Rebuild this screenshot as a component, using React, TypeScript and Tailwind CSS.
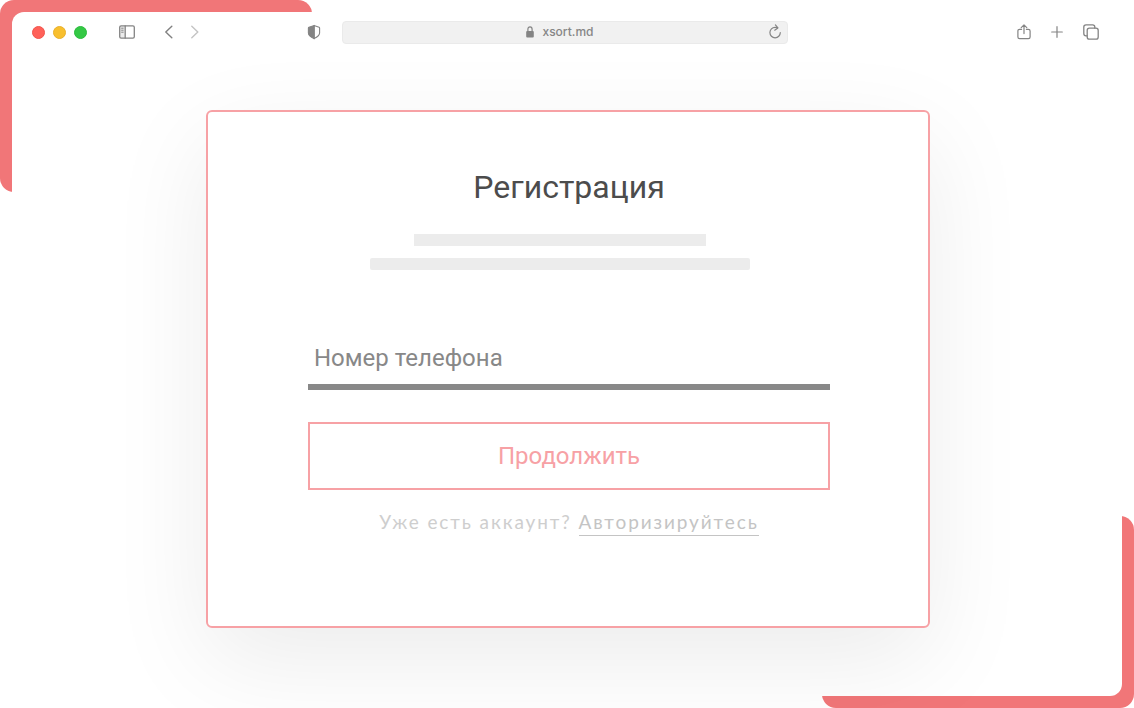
const iconProps = {
  fill: "none",
  stroke: "#848484",
  strokeLinecap: "round" as const,
  strokeLinejoin: "round" as const,
  "aria-hidden": true,
};

function SidebarIcon() {
  return (
    <svg width="16" height="14" viewBox="0 0 16 14" {...iconProps} strokeWidth="1.3">
      <rect x="1" y="1" width="5" height="12" fill="#ececec" stroke="none" />
      <rect x="0.7" y="0.9" width="14.6" height="12.2" rx="1.4" />
      <path d="M6.2 0.9V13.1" />
      <path d="M2.6 3.2H4.2M2.6 5.2H4.2M2.6 7.2H4.2" strokeWidth="1" />
    </svg>
  );
}

function ChevronIcon({ forward = false }: { forward?: boolean }) {
  return (
    <svg width="8" height="14" viewBox="0 0 8 14" {...iconProps} stroke={forward ? "#c4c4c4" : "#808080"} strokeWidth="1.4">
      <path d={forward ? "M0.8 1.2L6.8 7L0.8 12.8" : "M6.8 1.2L0.8 7L6.8 12.8"} />
    </svg>
  );
}

function ShieldIcon() {
  return (
    <svg width="14" height="16" viewBox="0 0 14 16" {...iconProps} strokeWidth="1.1">
      <path d="M7 1.5L12.1 3.2Q12.6 3.4 12.6 4V9C12.6 11.4 10.6 12.9 7 14.6" />
      <path d="M7.3 1.4V14.7C3.4 12.9 1.4 11.4 1.4 9V4Q1.4 3.4 1.9 3.2L7.3 1.4Z" fill="#848484" />
    </svg>
  );
}

function LockIcon() {
  return (
    <svg width="8" height="12" viewBox="0 0 8 12" {...iconProps} strokeWidth="1.2">
      <path d="M1.9 5.5V3.2C1.9 1.8 2.8 0.9 4 0.9S6.1 1.8 6.1 3.2V5.5" />
      <rect x="0.2" y="5" width="7.6" height="6.6" rx="1" fill="#848484" stroke="none" />
    </svg>
  );
}

function ReloadIcon() {
  return (
    <svg width="14" height="16" viewBox="0 0 14 16" {...iconProps} strokeWidth="1.2">
      <path d="M12.3 8.6A5.2 5.2 0 1 1 7.1 3.4C8 3.4 8.8 3.6 9.6 3.9" />
      <path d="M7.4 0.9L9.9 3.9L6.7 6.2" />
    </svg>
  );
}

function ShareIcon() {
  return (
    <svg width="14" height="16" viewBox="0 0 14 16" {...iconProps} strokeWidth="1.2">
      <path d="M4.6 5.3H2.6C1.5 5.3 0.9 5.9 0.9 7V13C0.9 14.1 1.5 14.7 2.6 14.7H11.4C12.5 14.7 13.1 14.1 13.1 13V7C13.1 5.9 12.5 5.3 11.4 5.3H9.4" />
      <path d="M7 9.6V1.2M4.2 3.6L7 0.9L9.8 3.6" />
    </svg>
  );
}

function PlusIcon() {
  return (
    <svg width="12" height="12" viewBox="0 0 12 12" {...iconProps} strokeWidth="1.2">
      <path d="M6 0.7V11.3M0.7 6H11.3" />
    </svg>
  );
}

function TabsIcon() {
  return (
    <svg width="16" height="16" viewBox="0 0 16 16" {...iconProps} strokeWidth="1.3">
      <rect x="4.2" y="4.2" width="11" height="11" rx="2.2" />
      <path d="M4.2 11.8H3C1.6 11.8 0.8 11 0.8 9.6V3C0.8 1.6 1.6 0.8 3 0.8H9.6C11 0.8 11.8 1.6 11.8 3V4.2" />
    </svg>
  );
}

function Toolbar() {
  return (
    <header className="grid h-10 grid-cols-[1fr_minmax(0,446px)_1fr] items-center pr-1">
      <div className="flex items-center pl-5">
        <div className="flex gap-2">
          <button type="button" aria-label="Закрыть" className="size-[13px] rounded-full border border-[#f2544b] bg-[#ff6159]" />
          <button type="button" aria-label="Свернуть" className="size-[13px] rounded-full border border-[#e9b02b] bg-[#f8bf2e]" />
          <button type="button" aria-label="Развернуть" className="size-[13px] rounded-full border border-[#2bbc3d] bg-[#34c845]" />
        </div>
        <button type="button" aria-label="Боковая панель" className="ml-8"><SidebarIcon /></button>
        <button type="button" aria-label="Назад" className="ml-[30px]"><ChevronIcon /></button>
        <button type="button" aria-label="Вперёд" className="ml-[18px]"><ChevronIcon forward /></button>
        <button type="button" aria-label="Конфиденциальность" className="mr-[21px] ml-auto"><ShieldIcon /></button>
      </div>
      <div className="flex h-[23px] items-center rounded border border-[#eaeaea] bg-[#f1f1f1] px-[5px]">
        <p className="flex flex-1 items-center justify-center gap-2 pl-1 font-['Inter',sans-serif] text-xs font-medium text-[#868686]">
          <LockIcon />
          xsort.md
        </p>
        <button type="button" aria-label="Обновить"><ReloadIcon /></button>
      </div>
      <div className="flex items-center justify-end gap-5 pr-[19px]">
        <button type="button" aria-label="Поделиться"><ShareIcon /></button>
        <button type="button" aria-label="Новая вкладка"><PlusIcon /></button>
        <button type="button" aria-label="Все вкладки"><TabsIcon /></button>
      </div>
    </header>
  );
}

function RegistrationCard() {
  return (
    <form
      className="w-full max-w-[724px] rounded-md border-2 border-[#f7a1a5] bg-white pt-[55px] pr-[98px] pb-[90px] pl-[100px] shadow-[0_32px_100px_rgba(0,0,0,0.08)]"
      onSubmit={(event) => event.preventDefault()}
    >
      <h1 className="text-center text-[32px] leading-10 text-[#4c4c4c]">Регистрация</h1>
      <div className="mt-[27px] flex flex-col items-center gap-3 pr-[18px]">
        <div className="h-3 w-[292px] bg-[#ececec]" />
        <div className="h-3 w-[380px] rounded-xs bg-[#ececec]" />
      </div>
      <input
        type="tel"
        aria-label="Номер телефона"
        placeholder="Номер телефона"
        className="mt-[62px] block h-[58px] w-full border-b-[6px] border-[#888888] bg-transparent px-1.5 text-2xl text-[#888888] outline-none placeholder:text-[#888888] placeholder:opacity-100"
      />
      <button type="submit" className="mt-8 h-[68px] w-full border-2 border-[#f7a1a5] text-2xl text-[#f7a1a5]">
        Продолжить
      </button>
      <p className="mt-[19px] text-center font-['Lato',sans-serif] text-[19px] leading-[26px] tracking-widest text-[#cecece]">
        Уже есть аккаунт?{" "}
        <a href="#login" className="inline-block border-b border-[#c4c4c4] leading-[26px] text-[#c4c4c4]">
          Авторизируйтесь
        </a>
      </p>
    </form>
  );
}

export default function App() {
  return (
    <div className="relative flex min-h-screen flex-col overflow-hidden bg-white p-3 font-['Roboto',sans-serif]">
      <div className="absolute top-0 left-0 h-48 w-[312px] rounded-[14px] bg-[#f17678]" />
      <div className="absolute right-0 bottom-0 h-48 w-[312px] rounded-[14px] bg-[#f17678]" />
      <div className="relative flex flex-1 flex-col rounded-xl bg-white">
        <Toolbar />
        <main className="flex justify-center pt-[58px] pr-4 pb-[68px] pl-[18px]">
          <RegistrationCard />
        </main>
      </div>
    </div>
  );
}
